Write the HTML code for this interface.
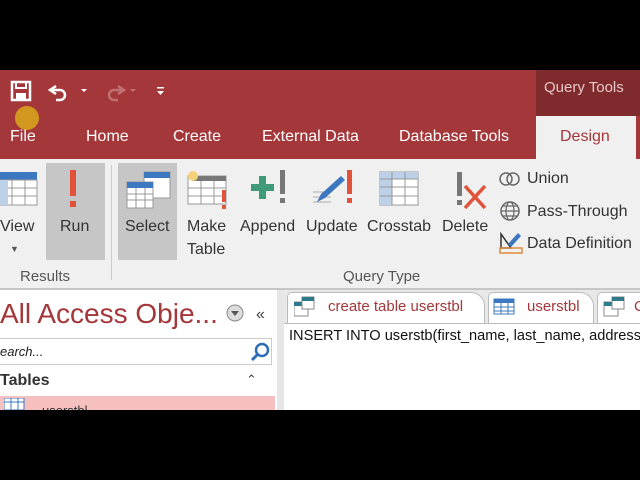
<!DOCTYPE html>
<html><head><meta charset="utf-8"><style>
*{margin:0;padding:0;box-sizing:border-box}
body{width:640px;height:480px;background:#000;position:relative;overflow:hidden;font-family:"Liberation Sans",sans-serif}
.a{position:absolute;white-space:nowrap}
.red{background:#a4373a}
.tab{color:#fff;font-size:16px;top:128px}
.lbl{color:#333;font-size:16px;text-align:center}
</style></head><body>
<div class="a red" style="left:0;top:70px;width:640px;height:89px"></div>
<div class="a" style="left:536px;top:70px;width:104px;height:46px;background:#7f2a2c"></div>
<div class="a" style="left:544px;top:79px;color:#e9c8c8;font-size:15px">Query Tools</div>
<div class="a" style="left:536px;top:116px;width:100px;height:43px;background:#f0f0f0"></div>
<!-- QAT -->
<svg class="a" style="left:10px;top:80px" width="160" height="24">
<rect x="2" y="2" width="18" height="18" fill="none" stroke="#fff" stroke-width="2.5"/><rect x="6" y="2" width="10" height="6" fill="none" stroke="#fff" stroke-width="2"/><rect x="6" y="13" width="10" height="7" fill="#fff"/>
<path d="M46 6 l-6 4 l6 4 M40 10 h10 a5 5 0 0 1 0 10 h-4" fill="none" stroke="#fff" stroke-width="2.5"/>
<path d="M71 9 l3 3 l3 -3z" fill="#fff"/>
<path d="M108 6 l6 4 l-6 4 M114 10 h-10 a5 5 0 0 0 0 10 h4" fill="none" stroke="#c0706f" stroke-width="2.5"/>
<path d="M120 9 l3 3 l3 -3z" fill="#c0706f"/>
<rect x="147" y="7" width="7" height="1.5" fill="#fff"/><path d="M147 11 h7 l-3.5 4z" fill="#fff"/>
</svg>
<div class="a" style="left:15px;top:106px;width:24px;height:24px;border-radius:50%;background:#d7a21c;opacity:.9"></div>
<div class="a tab" style="left:10px">File</div>
<div class="a tab" style="left:86px">Home</div>
<div class="a tab" style="left:173px">Create</div>
<div class="a tab" style="left:262px">External Data</div>
<div class="a tab" style="left:399px">Database Tools</div>
<div class="a" style="left:560px;top:128px;color:#a4373a;font-size:16px">Design</div>
<!-- ribbon -->
<div class="a" style="left:0;top:159px;width:640px;height:130px;background:#f0f0f0"></div>
<div class="a" style="left:0;top:288px;width:640px;height:2px;background:#c6c6c6"></div>
<div class="a" style="left:46px;top:163px;width:59px;height:97px;background:#c6c6c6"></div>
<div class="a" style="left:118px;top:163px;width:59px;height:97px;background:#c6c6c6"></div>
<div class="a" style="left:111px;top:165px;width:1px;height:115px;background:#ccc"></div>
<!-- View icon -->
<svg class="a" style="left:0;top:170px" width="40" height="40"><rect x="0" y="2" width="37" height="8" fill="#3b78c0"/><rect x="0" y="10" width="37" height="25" fill="#fff" stroke="#999"/><path d="M0 18h37M0 26h37M12 10v25M25 10v25" stroke="#999"/><rect x="0" y="10" width="8" height="25" fill="#bcd0e8"/></svg>
<div class="a lbl" style="left:0;top:218px">View</div>
<div class="a" style="left:10px;top:244px;color:#555;font-size:9px">▼</div>
<!-- Run -->
<svg class="a" style="left:66px;top:170px" width="16" height="40"><rect x="4" y="0" width="6" height="26" fill="#e0533a"/><rect x="4" y="31" width="6" height="6" fill="#e0533a"/></svg>
<div class="a lbl" style="left:60px;top:218px">Run</div>
<!-- Select -->
<svg class="a" style="left:126px;top:170px" width="46" height="40"><rect x="18" y="2" width="26" height="26" fill="#fff" stroke="#999"/><rect x="18" y="2" width="26" height="6" fill="#3b78c0"/><rect x="1" y="12" width="26" height="26" fill="#fff" stroke="#999"/><rect x="1" y="12" width="26" height="6" fill="#3b78c0"/><path d="M1 24h26M1 30h26M10 18v20M19 18v20" stroke="#999"/></svg>
<div class="a lbl" style="left:125px;top:218px">Select</div>
<!-- Make table -->
<svg class="a" style="left:184px;top:168px" width="46" height="44"><rect x="4" y="8" width="38" height="28" fill="#fff" stroke="#999"/><rect x="8" y="8" width="34" height="5" fill="#777"/><path d="M4 20h38M4 28h38M17 13v23M30 13v23" stroke="#999"/><circle cx="9" cy="8" r="5" fill="#f5d27a"/><rect x="38" y="22" width="4" height="12" fill="#e0533a"/><rect x="38" y="37" width="4" height="4" fill="#e0533a"/></svg>
<div class="a lbl" style="left:187px;top:218px">Make</div>
<div class="a lbl" style="left:187px;top:241px">Table</div>
<!-- Append -->
<svg class="a" style="left:250px;top:170px" width="40" height="40"><path d="M9 6h7v8h8v7h-8v8h-7v-8h-8v-7h8z" fill="#3f9a7a"/><rect x="30" y="0" width="5" height="24" fill="#777"/><rect x="30" y="28" width="5" height="5" fill="#777"/></svg>
<div class="a lbl" style="left:240px;top:218px">Append</div>
<!-- Update -->
<svg class="a" style="left:311px;top:170px" width="46" height="40"><path d="M2 22h14M2 27h18M2 32h18" stroke="#aaa"/><path d="M6 32l4-8 20-18 4 4-20 18z" fill="#3b78c0"/><rect x="36" y="0" width="5" height="24" fill="#e0533a"/><rect x="36" y="28" width="5" height="5" fill="#e0533a"/></svg>
<div class="a lbl" style="left:306px;top:218px">Update</div>
<!-- Crosstab -->
<svg class="a" style="left:379px;top:171px" width="42" height="36"><rect x="1" y="1" width="38" height="33" fill="#fff" stroke="#999"/><rect x="1" y="1" width="12" height="33" fill="#bcd0e8"/><rect x="1" y="1" width="38" height="7" fill="#bcd0e8"/><path d="M1 8h38M1 16h38M1 25h38M13 1v33M26 1v33" stroke="#999"/></svg>
<div class="a lbl" style="left:367px;top:218px">Crosstab</div>
<!-- Delete -->
<svg class="a" style="left:455px;top:170px" width="36" height="44"><rect x="2" y="2" width="5" height="24" fill="#777"/><rect x="2" y="30" width="5" height="5" fill="#777"/><path d="M10 16l20 22M30 16l-20 22" stroke="#e0533a" stroke-width="3.5"/></svg>
<div class="a lbl" style="left:442px;top:218px">Delete</div>
<!-- small buttons -->
<svg class="a" style="left:498px;top:170px" width="26" height="86"><circle cx="8" cy="9" r="6" fill="none" stroke="#666" stroke-width="1.5"/><circle cx="15" cy="9" r="6" fill="none" stroke="#666" stroke-width="1.5"/>
<circle cx="12" cy="41" r="9" fill="none" stroke="#666" stroke-width="1.5"/><ellipse cx="12" cy="41" rx="4" ry="9" fill="none" stroke="#666" stroke-width="1.2"/><path d="M3 41h18M5 36h14M5 46h14" stroke="#666" stroke-width="1.2"/>
<path d="M3 78v-14l10 14z" fill="none" stroke="#333" stroke-width="1.5"/><path d="M10 74l10-11 3 3-10 11z" fill="#3b78c0"/><rect x="2" y="78" width="22" height="5" fill="none" stroke="#e08a3a" stroke-width="1.5"/></svg>
<div class="a lbl" style="left:527px;top:170px">Union</div>
<div class="a lbl" style="left:527px;top:203px">Pass-Through</div>
<div class="a lbl" style="left:527px;top:235px">Data Definition</div>
<div class="a" style="left:20px;top:268px;color:#555;font-size:15px">Results</div>
<div class="a" style="left:343px;top:268px;color:#555;font-size:15px">Query Type</div>
<!-- nav pane -->
<div class="a" style="left:0;top:290px;width:284px;height:120px;background:#fff"></div>
<div class="a" style="left:277px;top:290px;width:7px;height:120px;background:#e6e6e6"></div>
<div class="a" style="left:0;top:298px;color:#a4373a;font-size:28px">All Access Obje...</div>
<svg class="a" style="left:226px;top:304px" width="46" height="20"><circle cx="9" cy="9" r="8" fill="#ddd" stroke="#888"/><path d="M5 7h8l-4 5z" fill="#555"/><text x="30" y="15" font-size="16" fill="#444" font-family="Liberation Sans">«</text></svg>
<div class="a" style="left:0;top:338px;width:272px;height:27px;border:1px solid #ccc;border-left:none;background:#fff"></div>
<div class="a" style="left:0;top:344px;font-size:13px;font-style:italic;color:#222">earch...</div>
<svg class="a" style="left:250px;top:341px" width="22" height="22"><circle cx="12" cy="9" r="6" fill="none" stroke="#2f6db5" stroke-width="2.5"/><path d="M8 13l-6 6" stroke="#2f6db5" stroke-width="3"/></svg>
<div class="a" style="left:0;top:372px;font-size:16px;color:#333;font-weight:bold">Tables</div>
<div class="a" style="left:246px;top:372px;font-size:13px;color:#444">⌃</div>
<div class="a" style="left:0;top:396px;width:275px;height:14px;background:#f7c0c0"></div>
<svg class="a" style="left:4px;top:398px" width="22" height="12"><rect x="0" y="0" width="20" height="12" fill="#fff" stroke="#3b78c0"/><path d="M0 4h20M7 0v12M14 0v12" stroke="#3b78c0"/></svg>
<div class="a" style="left:42px;top:403px;font-size:13px;color:#333">userstbl</div>
<!-- doc tabs -->
<div class="a" style="left:284px;top:290px;width:356px;height:120px;background:#fff"></div>
<div class="a" style="left:284px;top:290px;width:356px;height:34px;background:#e8e8e8"></div>
<div class="a" style="left:287px;top:292px;width:198px;height:32px;background:#fff;border:1px solid #bbb;border-bottom:none;border-radius:5px 14px 0 0"></div>
<div class="a" style="left:488px;top:292px;width:106px;height:32px;background:#fff;border:1px solid #bbb;border-bottom:none;border-radius:5px 14px 0 0"></div>
<div class="a" style="left:597px;top:292px;width:50px;height:32px;background:#fff;border:1px solid #bbb;border-bottom:none;border-radius:5px 0 0 0"></div>
<svg class="a" style="left:294px;top:296px" width="340" height="22">
<g><rect x="0" y="6" width="14" height="14" fill="#fff" stroke="#888"/><rect x="0" y="6" width="14" height="4" fill="#2f7a8a"/><rect x="8" y="1" width="12" height="12" fill="#fff" stroke="#888"/><rect x="8" y="1" width="12" height="4" fill="#2f7a8a"/></g>
<g transform="translate(200,0)"><rect x="0" y="3" width="20" height="15" fill="#fff" stroke="#3b78c0"/><rect x="0" y="3" width="20" height="4" fill="#3b78c0"/><path d="M0 11h20M0 15h20M7 7v11M14 7v11" stroke="#3b78c0"/></g>
<g transform="translate(310,0)"><rect x="0" y="6" width="14" height="14" fill="#fff" stroke="#888"/><rect x="0" y="6" width="14" height="4" fill="#2f7a8a"/><rect x="8" y="1" width="12" height="12" fill="#fff" stroke="#888"/><rect x="8" y="1" width="12" height="4" fill="#2f7a8a"/></g>
</svg>
<div class="a" style="left:328px;top:298px;font-size:15px;color:#a4373a">create table userstbl</div>
<div class="a" style="left:527px;top:298px;font-size:15px;color:#a4373a">userstbl</div>
<div class="a" style="left:634px;top:298px;font-size:15px;color:#a4373a">C</div>
<div class="a" style="left:284px;top:323px;width:356px;height:1px;background:#bbb"></div>
<div class="a" style="left:289px;top:328px;font-size:14.6px;color:#111">INSERT INTO userstb(first_name, last_name, address</div>
<div class="a" style="left:0;top:410px;width:640px;height:70px;background:#000"></div>
</body></html>
